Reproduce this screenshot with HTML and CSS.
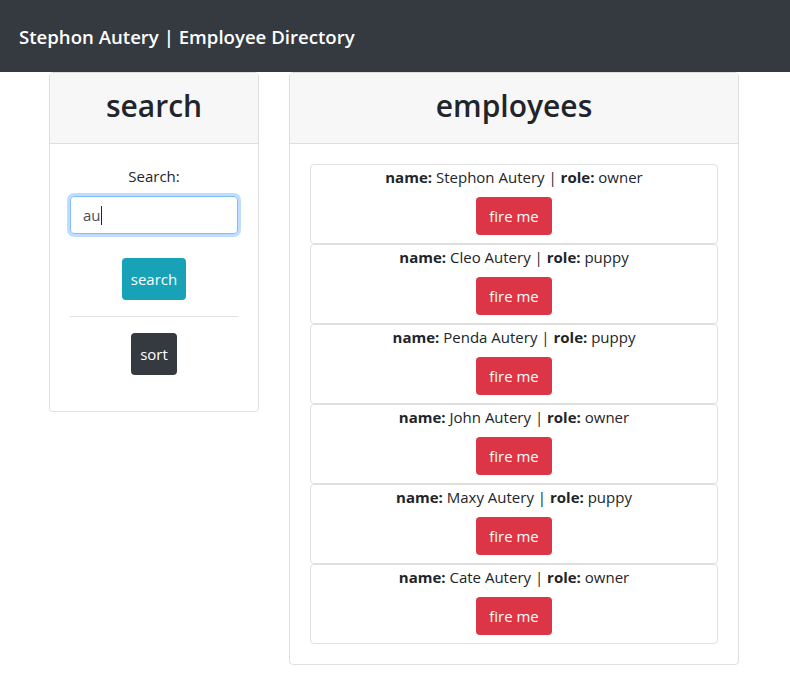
FILE: index.html
```html
<!DOCTYPE html>
<html lang="en">
<head>
<meta charset="utf-8">
<title>Employee Directory</title>
<link rel="stylesheet" href="styles.css">
</head>
<body>
<nav class="navbar"><span class="brand">Stephon Autery | Employee Directory</span></nav>
<div class="container">
  <div class="col-left">
    <div class="card">
      <div class="card-header"><h2>search</h2></div>
      <div class="card-body search-body">
        <label class="label">Search:</label>
        <div class="input">au<span class="caret"></span></div>
        <button class="btn btn-info">search</button>
        <hr class="divider">
        <button class="btn btn-dark">sort</button>
      </div>
    </div>
  </div>
  <div class="col-right">
    <div class="card">
      <div class="card-header"><h2>employees</h2></div>
      <div class="card-body list">
        <div class="item"><p><b>name:</b> Stephon Autery | <b>role:</b> owner</p><button class="btn btn-danger">fire me</button></div>
        <div class="item"><p><b>name:</b> Cleo Autery | <b>role:</b> puppy</p><button class="btn btn-danger">fire me</button></div>
        <div class="item"><p><b>name:</b> Penda Autery | <b>role:</b> puppy</p><button class="btn btn-danger">fire me</button></div>
        <div class="item"><p><b>name:</b> John Autery | <b>role:</b> owner</p><button class="btn btn-danger">fire me</button></div>
        <div class="item"><p><b>name:</b> Maxy Autery | <b>role:</b> puppy</p><button class="btn btn-danger">fire me</button></div>
        <div class="item"><p><b>name:</b> Cate Autery | <b>role:</b> owner</p><button class="btn btn-danger">fire me</button></div>
      </div>
    </div>
  </div>
</div>
</body>
</html>
```
FILE: styles.css
```css
* { box-sizing: border-box; }
body {
  margin: 0;
  font-family: "Open Sans", "Noto Sans", sans-serif;
  font-size: 15px;
  line-height: 1.5;
  color: #212529;
  background: #fff;
}
.navbar {
  height: 72px;
  background: #343a40;
  display: flex;
  align-items: center;
  padding: 0 19px;
}
.brand {
  color: #fff;
  font-size: 18.6px;
  font-weight: 600;
  line-height: 30px;
  margin-top: 2px;
}
.container {
  display: flex;
  gap: 30px;
  padding-left: 49px;
}
.col-left { width: 210px; }
.col-right { width: 450px; }
.card {
  border: 1px solid #dfdfdf;
  border-radius: 4px;
  background: #fff;
}
.card-header {
  background: #f7f7f7;
  border-bottom: 1px solid #dfdfdf;
  height: 71px;
  display: flex;
  justify-content: center;
  align-items: flex-start;
  padding-top: 14px;
}
.card-header h2 {
  margin: 0;
  font-size: 30px;
  font-weight: 600;
  line-height: 38px;
}
.card-body { padding: 20px 19px; }
.search-body {
  display: flex;
  flex-direction: column;
  align-items: center;
  padding-bottom: 36px;
}
.label { line-height: 24px; margin-bottom: 8px; }
.input {
  width: 168px;
  height: 38px;
  border: 1px solid #80bdff;
  border-radius: 4px;
  box-shadow: 0 0 0 3px rgba(0,123,255,.25);
  padding: 6px 12px;
  text-align: left;
  color: #495057;
  line-height: 24px;
  display: flex;
  align-items: center;
}
.caret {
  display: inline-block;
  width: 1px;
  height: 19px;
  background: #212529;
}
.btn {
  font-family: inherit;
  font-size: 15px;
  line-height: 24px;
  color: #fff;
  border: 1px solid transparent;
  border-radius: 4px;
  padding: 6px 12px;
  cursor: pointer;
}
.btn-info { background: #17a2b8; margin-top: 24px; padding: 8px 8px; }
.btn-dark { background: #343a40; padding: 8px 8px; }
.btn-danger { background: #dc3545; }
.divider {
  width: 168px;
  border: 0;
  border-top: 1px solid #dfdfdf;
  margin: 16px 0;
}
.list { padding: 20px; }
.item {
  border: 1px solid #dfdfdf;
  border-radius: 4px;
  height: 80px;
  display: flex;
  flex-direction: column;
  align-items: center;
}
.item p { margin: 0 0 8px; line-height: 24px; }
.item b { font-weight: 700; }
```
